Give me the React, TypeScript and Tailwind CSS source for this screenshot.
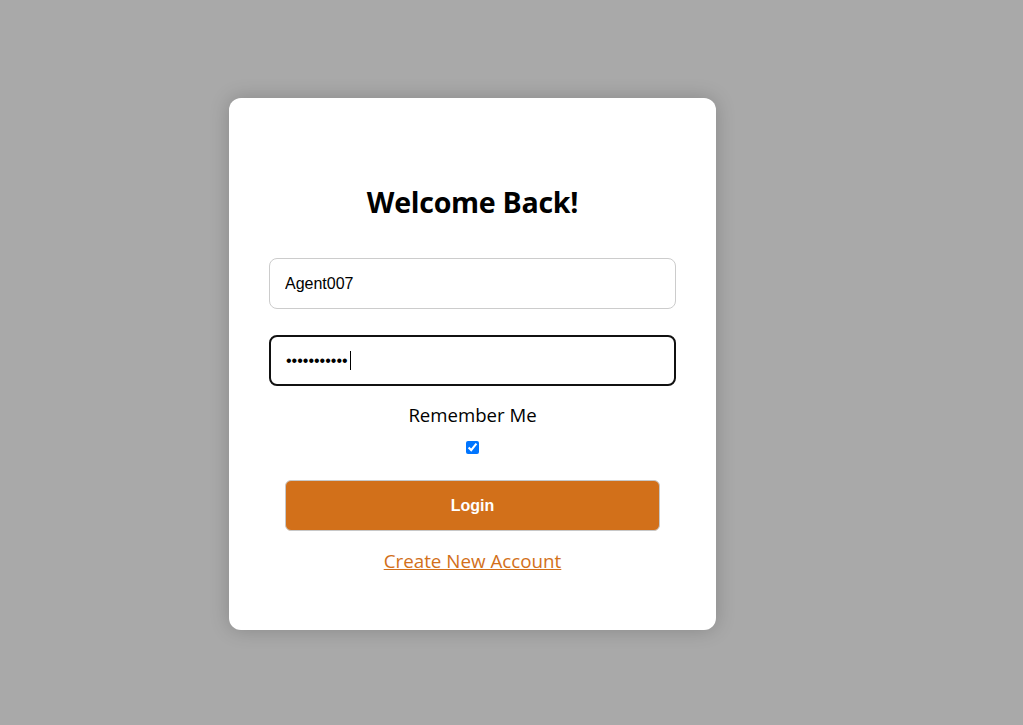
import React from "react";

export default function App() {
  return (
    <div className="w-[1023px] h-[725px] bg-[#a9a9a9] flex items-center pl-[229px] pt-[3px]">
      <div className="w-[487px] h-[532px] bg-white rounded-[12px] shadow-[0_0_20px_rgba(0,0,0,0.2)] px-10 pt-[86px] flex flex-col items-center font-['Open_Sans','Noto_Sans',sans-serif]">
        <h1 className="text-[28.6px] leading-[36px] font-bold text-black tracking-[-0.3px]">Welcome Back!</h1>
        <input
          type="text"
          readOnly
          value="Agent007"
          className="mt-[38px] w-full h-[51px] border border-[#cccccc] rounded-[8px] px-[15px] text-[16px] text-black font-['Liberation_Sans',Arial,sans-serif] outline-none"
        />
        <div className="relative mt-[26px] w-full">
          <input
            type="password"
            readOnly
            value="abcdefghijk"
            className="w-full h-[51px] border-2 border-[#111111] rounded-[8px] px-[15px] text-[16px] text-black font-['Liberation_Sans',Arial,sans-serif] outline-none caret-transparent"
          />
          <span className="absolute left-[81px] top-[16px] w-px h-[19px] bg-black" />
        </div>
        <label className="mt-[16px] text-[18.6px] leading-[26px] text-black">Remember Me</label>
        <input type="checkbox" readOnly checked className="mt-[13px] w-[13px] h-[13px] accent-[#0075ff]" />
        <button className="mt-[26px] w-[375px] h-[51px] bg-[#d2701a] border border-[#c8c8c8] rounded-[6px] text-white text-[16px] font-bold font-['Liberation_Sans',Arial,sans-serif]">
          Login
        </button>
        <a href="#" className="mt-[17px] text-[18.8px] leading-[26px] text-[#d2701a] underline">
          Create New Account
        </a>
      </div>
    </div>
  );
}
